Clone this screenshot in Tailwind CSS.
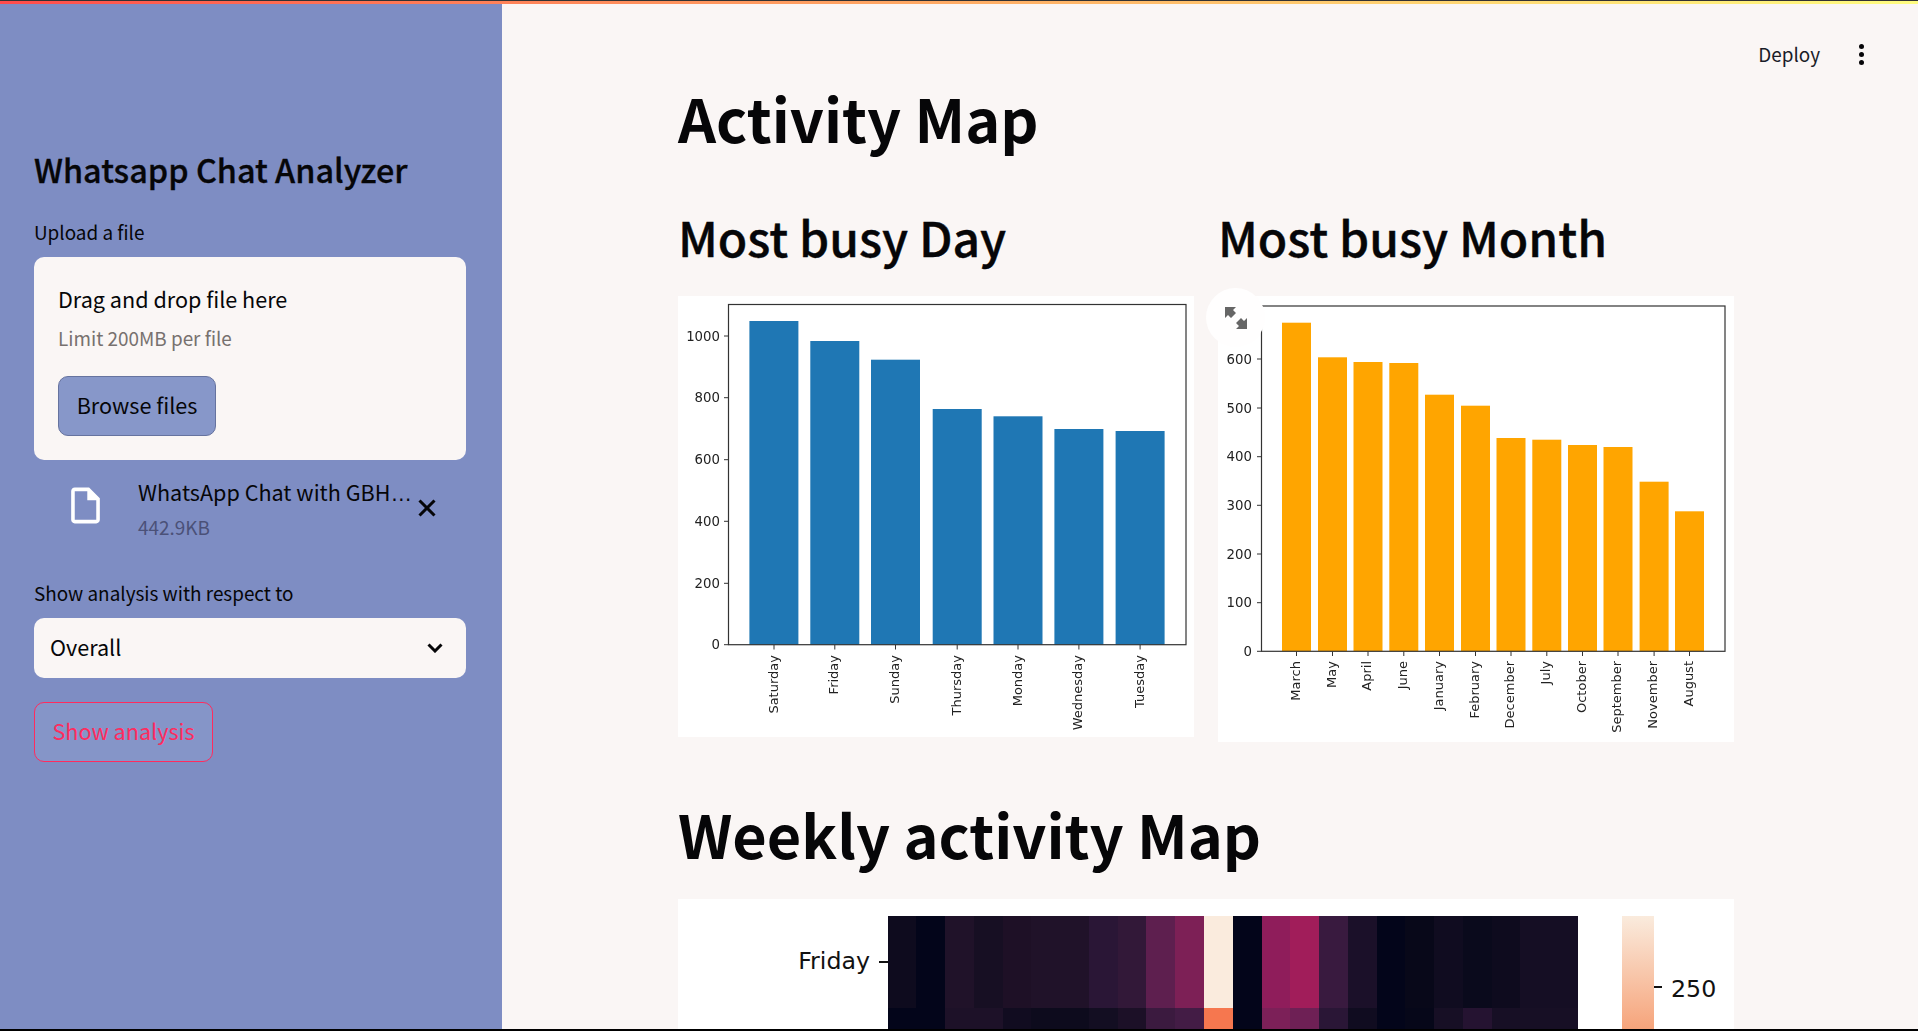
<!DOCTYPE html>
<html lang="en">
<head>
    <meta charset="UTF-8">
    <title>Whatsapp Chat Analyzer</title>
    <script src="https://cdn.jsdelivr.net/npm/@tailwindcss/browser@4"></script>
</head>
<body class="h-screen overflow-hidden flex flex-col bg-[#faf6f5] text-[#060608] font-['Noto_Sans_CJK_SC',sans-serif]">

    <!-- top stripe -->
    <div class="h-[4px] shrink-0 border-t border-[#333] bg-gradient-to-r from-[#ff4b4b] to-[#fffd80]"></div>

    <div class="flex flex-1 min-h-0">
        <!-- sidebar -->
        <aside class="w-[502px] shrink-0 bg-[#7e8dc3] pl-[34px] pr-[36px] pt-[143px]">
            <h2 class="text-[32.400px] leading-[44px] font-medium [-webkit-text-stroke:0.3px_#060608]">Whatsapp Chat Analyzer</h2>

            <div class="mt-[29px] text-[18.900px] leading-[24px]">Upload a file</div>
            <div class="mt-[13px] h-[203px] rounded-[10px] bg-[#faf6f5] pl-[24px] pt-[27px]">
                <div class="text-[21.600px] leading-[30px]">Drag and drop file here</div>
                <div class="mt-[11px] text-[18.900px] leading-[26px] text-[#77716f]">Limit 200MB per file</div>
                <button class="mt-[25px] w-[158px] h-[60px] pb-[1px] rounded-[10px] border border-[#66739f] bg-[#8797c9] text-[21.600px]">Browse files</button>
            </div>

            <div class="flex items-center h-[84px] mt-[6px]">
                <svg class="ml-[30px] mt-[-6px] w-[43px] h-[43px] shrink-0" viewBox="0 0 24 24" fill="#fff"><path d="M14 2H6c-1.100 0-2 .9-2 2v16c0 1.100.9 2 2 2h12c1.100 0 2-.9 2-2V8l-6-6zm4 18H6V4h7v5h5v11z"/></svg>
                <div class="ml-[31px] w-[280px] shrink-0">
                    <div class="whitespace-nowrap text-[21.600px] leading-[34px] pt-[2px]">WhatsApp Chat with GBH<span class="font-['Liberation_Sans'] tracking-[1px]">…</span></div>
                    <div class="text-[18.900px] leading-[32px] text-[#4b5178]">442.9KB</div>
                </div>
                <svg class="w-[18px] h-[18px] shrink-0" viewBox="0 0 18 18" stroke="#060608" stroke-width="3" fill="none"><path d="M1.500 1.500l15 15M16.500 1.500l-15 15"/></svg>
            </div>

            <div class="mt-[31px] text-[18.900px] leading-[24px]">Show analysis with respect to</div>
            <div class="mt-[13px] h-[60px] rounded-[10px] bg-[#faf6f5] flex items-center justify-between pl-[16px] pr-[23px]">
                <span class="text-[21.600px] pb-[1px]">Overall</span>
                <svg class="w-[16px] h-[10px]" viewBox="0 0 16 10" fill="none" stroke="#060608" stroke-width="3"><path d="M1.500 1.500L8 8l6.500-6.500"/></svg>
            </div>
            <button class="mt-[24px] w-[179px] h-[60px] pb-[1px] rounded-[10px] border border-[#ff2b5e] bg-[#8595c8] text-[#ff2b5e] text-[21.600px]">Show analysis</button>
        </aside>

        <!-- main -->
        <main class="relative flex-1 overflow-hidden pl-[176px] pr-[184px] pt-[77px]">
            <div class="absolute top-[35px] right-[54px] flex items-center gap-[39px]">
                <span class="text-[18.900px] leading-[30px] text-[#1a1c28]">Deploy</span>
                <div class="flex flex-col gap-[3px]">
                    <div class="w-[5px] h-[5px] rounded-full bg-[#060608]"></div>
                    <div class="w-[5px] h-[5px] rounded-full bg-[#060608]"></div>
                    <div class="w-[5px] h-[5px] rounded-full bg-[#060608]"></div>
                </div>
            </div>

            <h1 class="text-[59.400px] leading-[72px] font-bold">Activity Map</h1>

            <div class="grid grid-cols-2 gap-x-[24px] mt-[53px] items-start">
                <div>
                    <h2 class="h-[60px] text-[48px] leading-[60px] font-medium [-webkit-text-stroke:0.4px_#060608]">Most busy Day</h2>
                    <svg class="mt-[30px] block w-[516px] h-[441px] bg-white blur-[0.35px]" viewBox="678 296 516 441" font-family="DejaVu Sans" font-size="13" fill="#222">
                        <g fill="#1f77b4">
                            <rect x="749.400" y="321" width="49" height="323.700"/>
                            <rect x="810.300" y="341" width="49" height="303.700"/>
                            <rect x="871" y="359.700" width="49" height="285"/>
                            <rect x="932.700" y="409" width="49" height="235.700"/>
                            <rect x="993.500" y="416.300" width="49" height="228.400"/>
                            <rect x="1054.400" y="429" width="49" height="215.700"/>
                            <rect x="1115.600" y="431" width="49" height="213.700"/>
                        </g>
                        <rect x="728.500" y="304.500" width="457.500" height="340.200" fill="none" stroke="#333" stroke-width="1.200"/>
                        <g stroke="#333" stroke-width="1">
                            <path d="M724 336h4.500M724 397.700h4.500M724 459.700h4.500M724 521.300h4.500M724 583.300h4.500M724 644.700h4.500"/>
                            <path d="M774 645v4.500M834.800 645v4.500M895.500 645v4.500M957.200 645v4.500M1018 645v4.500M1078.900 645v4.500M1140.100 645v4.500"/>
                        </g>
                        <g text-anchor="end" font-size="13.300">
                            <text x="720" y="340.500">1000</text>
                            <text x="720" y="402.200">800</text>
                            <text x="720" y="464.200">600</text>
                            <text x="720" y="525.800">400</text>
                            <text x="720" y="587.800">200</text>
                            <text x="720" y="649.200">0</text>
                        </g>
                        <g text-anchor="end">
                            <text transform="translate(777.500 655) rotate(-90)">Saturday</text>
                            <text transform="translate(838.300 655) rotate(-90)">Friday</text>
                            <text transform="translate(899 655) rotate(-90)">Sunday</text>
                            <text transform="translate(960.700 655) rotate(-90)">Thursday</text>
                            <text transform="translate(1021.500 655) rotate(-90)">Monday</text>
                            <text transform="translate(1082.400 655) rotate(-90)">Wednesday</text>
                            <text transform="translate(1143.600 655) rotate(-90)">Tuesday</text>
                        </g>
                    </svg>
                </div>
                <div class="relative">
                    <h2 class="h-[60px] text-[48px] leading-[60px] font-medium [-webkit-text-stroke:0.4px_#060608]">Most busy Month</h2>
                    <svg class="mt-[30px] block w-[516px] h-[446px] bg-white blur-[0.35px]" viewBox="1218 296 516 446" font-family="DejaVu Sans" font-size="13" fill="#222">
                        <g fill="#ffa500">
                            <rect x="1282" y="322.700" width="29" height="328.600"/>
                            <rect x="1318" y="357.300" width="29" height="294"/>
                            <rect x="1353.500" y="362" width="29" height="289.300"/>
                            <rect x="1389.300" y="363" width="29" height="288.300"/>
                            <rect x="1425" y="394.700" width="29" height="256.600"/>
                            <rect x="1461" y="405.700" width="29" height="245.600"/>
                            <rect x="1496.500" y="438" width="29" height="213.300"/>
                            <rect x="1532.300" y="439.700" width="29" height="211.600"/>
                            <rect x="1568" y="445" width="29" height="206.300"/>
                            <rect x="1603.500" y="447" width="29" height="204.300"/>
                            <rect x="1639.600" y="481.700" width="29" height="169.600"/>
                            <rect x="1675" y="511.300" width="29" height="140"/>
                        </g>
                        <rect x="1261.500" y="306" width="463.500" height="345.300" fill="none" stroke="#333" stroke-width="1.200"/>
                        <g stroke="#333" stroke-width="1">
                            <path d="M1257 359h4.500M1257 408h4.500M1257 456.700h4.500M1257 505.300h4.500M1257 554h4.500M1257 602.700h4.500M1257 651.300h4.500"/>
                            <path d="M1296.500 651.500v4.500M1332.500 651.500v4.500M1368 651.500v4.500M1403.800 651.500v4.500M1439.500 651.500v4.500M1475.500 651.500v4.500M1511 651.500v4.500M1546.800 651.500v4.500M1582.500 651.500v4.500M1618 651.500v4.500M1654.100 651.500v4.500M1689.500 651.500v4.500"/>
                        </g>
                        <g text-anchor="end" font-size="13.300">
                            <text x="1252" y="363.500">600</text>
                            <text x="1252" y="412.500">500</text>
                            <text x="1252" y="461.200">400</text>
                            <text x="1252" y="509.800">300</text>
                            <text x="1252" y="558.500">200</text>
                            <text x="1252" y="607.200">100</text>
                            <text x="1252" y="655.800">0</text>
                        </g>
                        <g text-anchor="end">
                            <text transform="translate(1299.500 661) rotate(-90)">March</text>
                            <text transform="translate(1335.500 661) rotate(-90)">May</text>
                            <text transform="translate(1371 661) rotate(-90)">April</text>
                            <text transform="translate(1406.800 661) rotate(-90)">June</text>
                            <text transform="translate(1442.500 661) rotate(-90)">January</text>
                            <text transform="translate(1478.500 661) rotate(-90)">February</text>
                            <text transform="translate(1514 661) rotate(-90)">December</text>
                            <text transform="translate(1549.800 661) rotate(-90)">July</text>
                            <text transform="translate(1585.500 661) rotate(-90)">October</text>
                            <text transform="translate(1621 661) rotate(-90)">September</text>
                            <text transform="translate(1657.100 661) rotate(-90)">November</text>
                            <text transform="translate(1692.500 661) rotate(-90)">August</text>
                        </g>
                    </svg>
                    <!-- fullscreen button sits over the chart corner -->
                    <div class="absolute left-[-12px] top-[82px] w-[59px] h-[59px] rounded-full bg-[#fffefe] flex items-center justify-center">
                        <svg class="w-[22px] h-[22px]" viewBox="0 0 22 22" fill="#666"><path d="M0 0h11L8 3l3 3-5 5-3-3-3 3z"/><path d="M22 22H11l3-3-3-3 5-5 3 3 3-3z"/></svg>
                    </div>
                </div>
            </div>

            <h1 class="mt-[55px] text-[59.400px] leading-[72px] font-bold">Weekly activity Map</h1>

            <svg class="mt-[30px] block w-[1056px] h-[130px] bg-white" viewBox="678 899 1056 130" font-family="DejaVu Sans" font-size="23.700" fill="#111" shape-rendering="crispEdges">
                <g>
                    <rect x="887.500" y="916" width="29" height="92" fill="#0e0b1e"/>
                    <rect x="916.300" y="916" width="29" height="92" fill="#03051a"/>
                    <rect x="945" y="916" width="29" height="92" fill="#201229"/>
                    <rect x="973.800" y="916" width="29" height="92" fill="#170f23"/>
                    <rect x="1002.600" y="916" width="29" height="92" fill="#1e1026"/>
                    <rect x="1031.400" y="916" width="29" height="92" fill="#201229"/>
                    <rect x="1060.100" y="916" width="29" height="92" fill="#201229"/>
                    <rect x="1088.900" y="916" width="29" height="92" fill="#2a1636"/>
                    <rect x="1117.700" y="916" width="29" height="92" fill="#321838"/>
                    <rect x="1146.400" y="916" width="29" height="92" fill="#5e1f4f"/>
                    <rect x="1175.200" y="916" width="29" height="92" fill="#7d2056"/>
                    <rect x="1204" y="916" width="29" height="92" fill="#faebdd"/>
                    <rect x="1232.700" y="916" width="29" height="92" fill="#03051a"/>
                    <rect x="1261.500" y="916" width="29" height="92" fill="#8f1d5b"/>
                    <rect x="1290.300" y="916" width="29" height="92" fill="#a11d5a"/>
                    <rect x="1319.100" y="916" width="29" height="92" fill="#391a3f"/>
                    <rect x="1347.800" y="916" width="29" height="92" fill="#1b1029"/>
                    <rect x="1376.600" y="916" width="29" height="92" fill="#03051a"/>
                    <rect x="1405.400" y="916" width="29" height="92" fill="#080819"/>
                    <rect x="1434.100" y="916" width="29" height="92" fill="#100c20"/>
                    <rect x="1462.900" y="916" width="29" height="92" fill="#0a0a1c"/>
                    <rect x="1491.700" y="916" width="29" height="92" fill="#0e0b1e"/>
                    <rect x="1520.400" y="916" width="29" height="92" fill="#150e24"/>
                    <rect x="1549.200" y="916" width="28.800" height="92" fill="#150e24"/>
                </g>
                <g>
                    <rect x="887.500" y="1008" width="29" height="21" fill="#03051a"/>
                    <rect x="916.300" y="1008" width="29" height="21" fill="#03051a"/>
                    <rect x="945" y="1008" width="29" height="21" fill="#1d1128"/>
                    <rect x="973.800" y="1008" width="29" height="21" fill="#1d1128"/>
                    <rect x="1002.600" y="1008" width="29" height="21" fill="#110c20"/>
                    <rect x="1031.400" y="1008" width="29" height="21" fill="#0d0b1d"/>
                    <rect x="1060.100" y="1008" width="29" height="21" fill="#0d0b1d"/>
                    <rect x="1088.900" y="1008" width="29" height="21" fill="#130e22"/>
                    <rect x="1117.700" y="1008" width="29" height="21" fill="#1c1027"/>
                    <rect x="1146.400" y="1008" width="29" height="21" fill="#3b1a3f"/>
                    <rect x="1175.200" y="1008" width="29" height="21" fill="#431c45"/>
                    <rect x="1204" y="1008" width="29" height="21" fill="#f6774f"/>
                    <rect x="1232.700" y="1008" width="29" height="21" fill="#03051a"/>
                    <rect x="1261.500" y="1008" width="29" height="21" fill="#7c2058"/>
                    <rect x="1290.300" y="1008" width="29" height="21" fill="#6e2055"/>
                    <rect x="1319.100" y="1008" width="29" height="21" fill="#2a1636"/>
                    <rect x="1347.800" y="1008" width="29" height="21" fill="#100c20"/>
                    <rect x="1376.600" y="1008" width="29" height="21" fill="#03051a"/>
                    <rect x="1405.400" y="1008" width="29" height="21" fill="#060719"/>
                    <rect x="1434.100" y="1008" width="29" height="21" fill="#170f25"/>
                    <rect x="1462.900" y="1008" width="29" height="21" fill="#251331"/>
                    <rect x="1491.700" y="1008" width="29" height="21" fill="#170f25"/>
                    <rect x="1520.400" y="1008" width="29" height="21" fill="#170f25"/>
                    <rect x="1549.200" y="1008" width="28.800" height="21" fill="#170f25"/>
                </g>
                <defs>
                    <linearGradient id="rocket" x1="0" y1="0" x2="0" y2="1">
                        <stop offset="0" stop-color="#faebdd"/>
                        <stop offset="1" stop-color="#f6a47b"/>
                    </linearGradient>
                </defs>
                <rect x="1622" y="916" width="32" height="113" fill="url(#rocket)"/>
                <path d="M879 962h8.500M1654 987h8" stroke="#111" stroke-width="1.500" fill="none"/>
                <text x="870" y="969" text-anchor="end">Friday</text>
                <text x="1671" y="997">250</text>
            </svg>
        </main>
    </div>

    <div class="h-[2px] shrink-0 bg-black"></div>
</body>
</html>
